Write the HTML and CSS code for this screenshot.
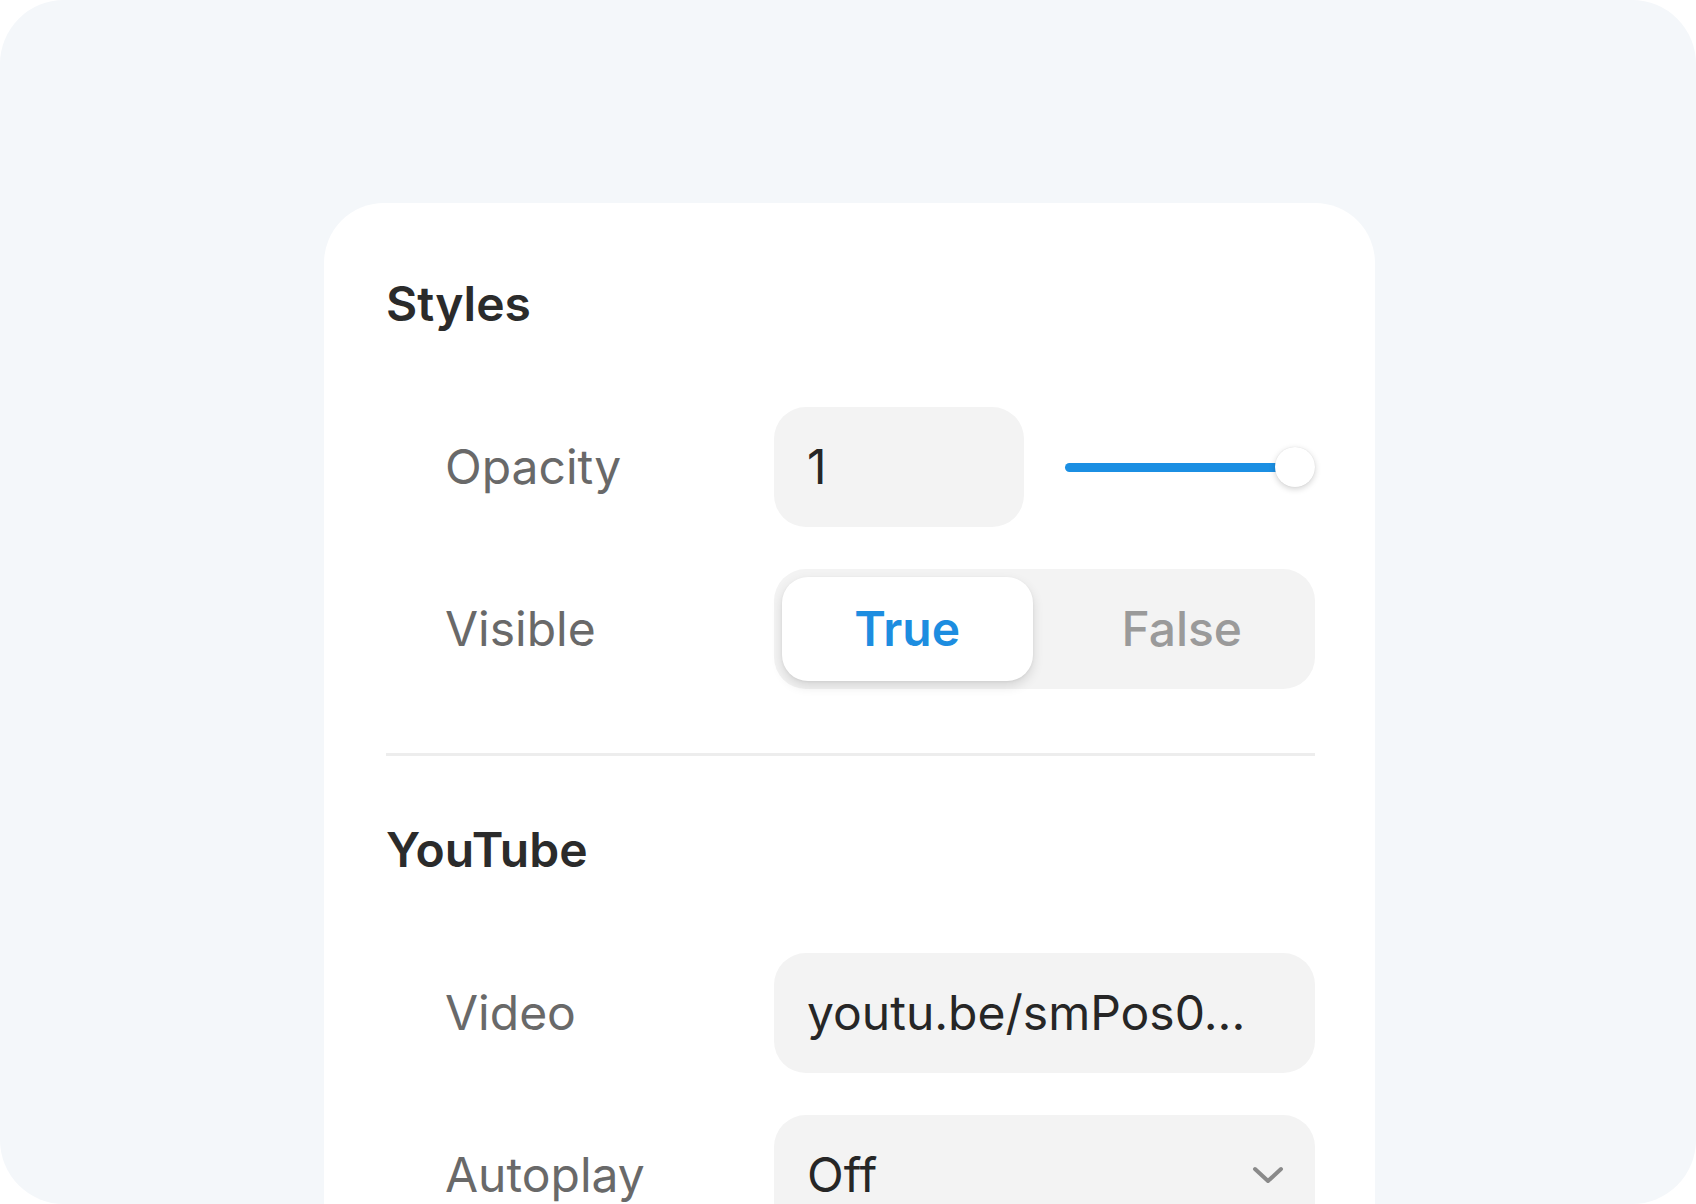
FILE: index.html
```html
<!DOCTYPE html>
<html lang="en">
<head>
<meta charset="utf-8">
<title>Styles panel</title>
<link rel="stylesheet" href="styles.css">
</head>
<body>
<div class="frame">
  <div class="card">
    <h2 class="section-title">Styles</h2>
    <div class="rows">
      <div class="row">
        <div class="label">Opacity</div>
        <div class="control control-opacity">
          <div class="field field-small">1</div>
          <div class="slider">
            <div class="slider-track"></div>
            <div class="slider-thumb"></div>
          </div>
        </div>
      </div>
      <div class="row">
        <div class="label">Visible</div>
        <div class="control">
          <div class="segmented">
            <div class="segment segment-active">True</div>
            <div class="segment">False</div>
          </div>
        </div>
      </div>
    </div>
    <div class="divider"></div>
    <h2 class="section-title">YouTube</h2>
    <div class="rows">
      <div class="row">
        <div class="label">Video</div>
        <div class="control">
          <div class="field field-wide">youtu.be/smPos0...</div>
        </div>
      </div>
      <div class="row">
        <div class="label">Autoplay</div>
        <div class="control">
          <div class="field field-wide field-select">
            <span>Off</span>
            <svg class="chevron" width="32" height="18" viewBox="0 0 32 18" aria-hidden="true">
              <path d="M3 3 L16 15 L29 3" fill="none" stroke="#8a8a8a" stroke-width="4" stroke-linecap="round" stroke-linejoin="round"/>
            </svg>
          </div>
        </div>
      </div>
    </div>
  </div>
</div>
</body>
</html>
```
FILE: styles.css
```css
* {
  box-sizing: border-box;
}

html, body {
  margin: 0;
  padding: 0;
  background: #ffffff;
}

body {
  font-family: Inter, "Noto Sans", "Liberation Sans", sans-serif;
}

.frame {
  width: 1696px;
  height: 1204px;
  background: #f4f7fa;
  border-radius: 64px;
  overflow: hidden;
  padding: 203px 0 0 324px;
}

.card {
  width: 1051px;
  min-height: 1100px;
  background: #ffffff;
  border-radius: 60px 60px 0 0;
  padding: 72px 60px 0 62px;
}

.section-title {
  margin: 0;
  font-size: 48px;
  line-height: 58px;
  font-weight: 600;
  color: #2b2b2b;
}

.rows {
  display: flex;
  flex-direction: column;
  gap: 42px;
  margin-top: 74px;
}

.row {
  display: grid;
  grid-template-columns: 388px 1fr;
  align-items: center;
  height: 120px;
}

.label {
  padding-left: 59px;
  font-size: 48px;
  line-height: 58px;
  color: #696969;
}

.control {
  display: flex;
  align-items: center;
  height: 120px;
}

.control-opacity {
  gap: 41px;
}

.field {
  height: 120px;
  background: #f3f3f3;
  border-radius: 32px;
  display: flex;
  align-items: center;
  padding-left: 33px;
  font-size: 48px;
  line-height: 58px;
  color: #262626;
  white-space: nowrap;
}

.field-small {
  width: 250px;
}

.field-wide {
  flex: 1;
}

.field-select {
  justify-content: space-between;
  padding-right: 31px;
}

.chevron {
  display: block;
}

.slider {
  flex: 1;
  height: 40px;
  position: relative;
  display: flex;
  align-items: center;
}

.slider-track {
  height: 9px;
  width: calc(100% - 20px);
  background: #1b8fe3;
  border-radius: 5px;
}

.slider-thumb {
  position: absolute;
  right: 0;
  top: 0;
  width: 40px;
  height: 40px;
  border-radius: 50%;
  background: #ffffff;
  box-shadow: 0 2px 6px rgba(0, 0, 0, 0.18), 0 0 1px rgba(0, 0, 0, 0.12);
}

.segmented {
  flex: 1;
  height: 120px;
  background: #f3f3f3;
  border-radius: 32px;
  padding: 8px;
  display: flex;
  gap: 24px;
}

.segment {
  flex: 1;
  display: flex;
  align-items: center;
  justify-content: center;
  border-radius: 26px;
  font-size: 48px;
  line-height: 58px;
  font-weight: 500;
  color: #9a9a9a;
}

.segment-active {
  background: #ffffff;
  color: #1d8de0;
  font-weight: 600;
  box-shadow: 0 5px 12px rgba(0, 0, 0, 0.12), 0 1px 3px rgba(0, 0, 0, 0.06);
}

.divider {
  height: 3px;
  background: #ededed;
  margin: 64px 0 65px;
}
```
